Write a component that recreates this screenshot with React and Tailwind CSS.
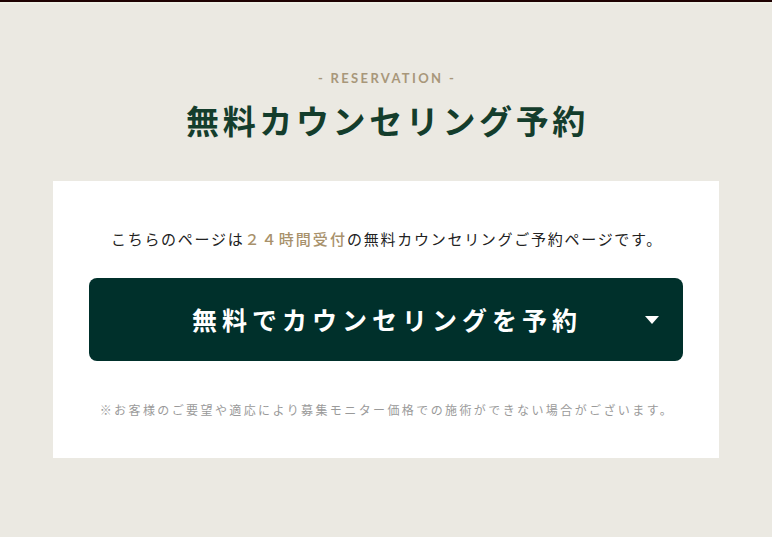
import React from "react";

export default function App() {
  const jp = { fontFamily: '"Noto Sans CJK JP", "Noto Sans", sans-serif' };
  return (
    <div className="w-[772px] h-[537px] bg-[#ebe9e2] overflow-hidden" style={jp}>
      <div className="h-[2px] bg-[#1f0202]" />
      <div className="h-[2px] bg-[#eef0e6]" />
      <div className="flex flex-col items-center pt-[64px]">
        <div className="text-[13px] leading-[20px] font-bold tracking-[0.18em] text-[#a8977a] pl-[2px]" style={{ fontFamily: '"Lato", "Noto Sans CJK JP", sans-serif' }}>
          - RESERVATION -
        </div>
        <h1 className="mt-[11px] text-[33px] leading-[42px] font-bold tracking-[0.11em] text-[#143d2c] pl-[3px]">
          無料カウンセリング予約
        </h1>
      </div>
      <div className="mx-[53px] mt-[40px] h-[277px] bg-white flex flex-col items-center px-[36px] pt-[46px]">
        <p className="text-[15px] leading-[24px] text-[#222] tracking-[0.115em] pl-[2px]">
          こちらのページは<span className="text-[#a8916b] font-medium tracking-[0.14em]">２４時間受付</span>の無料カウンセリングご予約ページです。
        </p>
        <button className="mt-[27px] w-full h-[83px] rounded-[8px] bg-[#00302b] flex items-center relative">
          <span className="flex-1 text-center text-white text-[25px] font-bold tracking-[0.2em] pl-[2px]">
            無料でカウンセリングを予約
          </span>
          <svg className="absolute right-[24px] top-[38px]" width="14" height="8" viewBox="0 0 14 8">
            <path d="M0 0 L14 0 L7 8 Z" fill="#fff" />
          </svg>
        </button>
        <p className="mt-[40px] text-[12px] leading-[18px] text-[#9a9a9a] tracking-[0.2em] pl-[2px]">
          ※お客様のご要望や適応により募集モニター価格での施術ができない場合がございます。
        </p>
      </div>
    </div>
  );
}
